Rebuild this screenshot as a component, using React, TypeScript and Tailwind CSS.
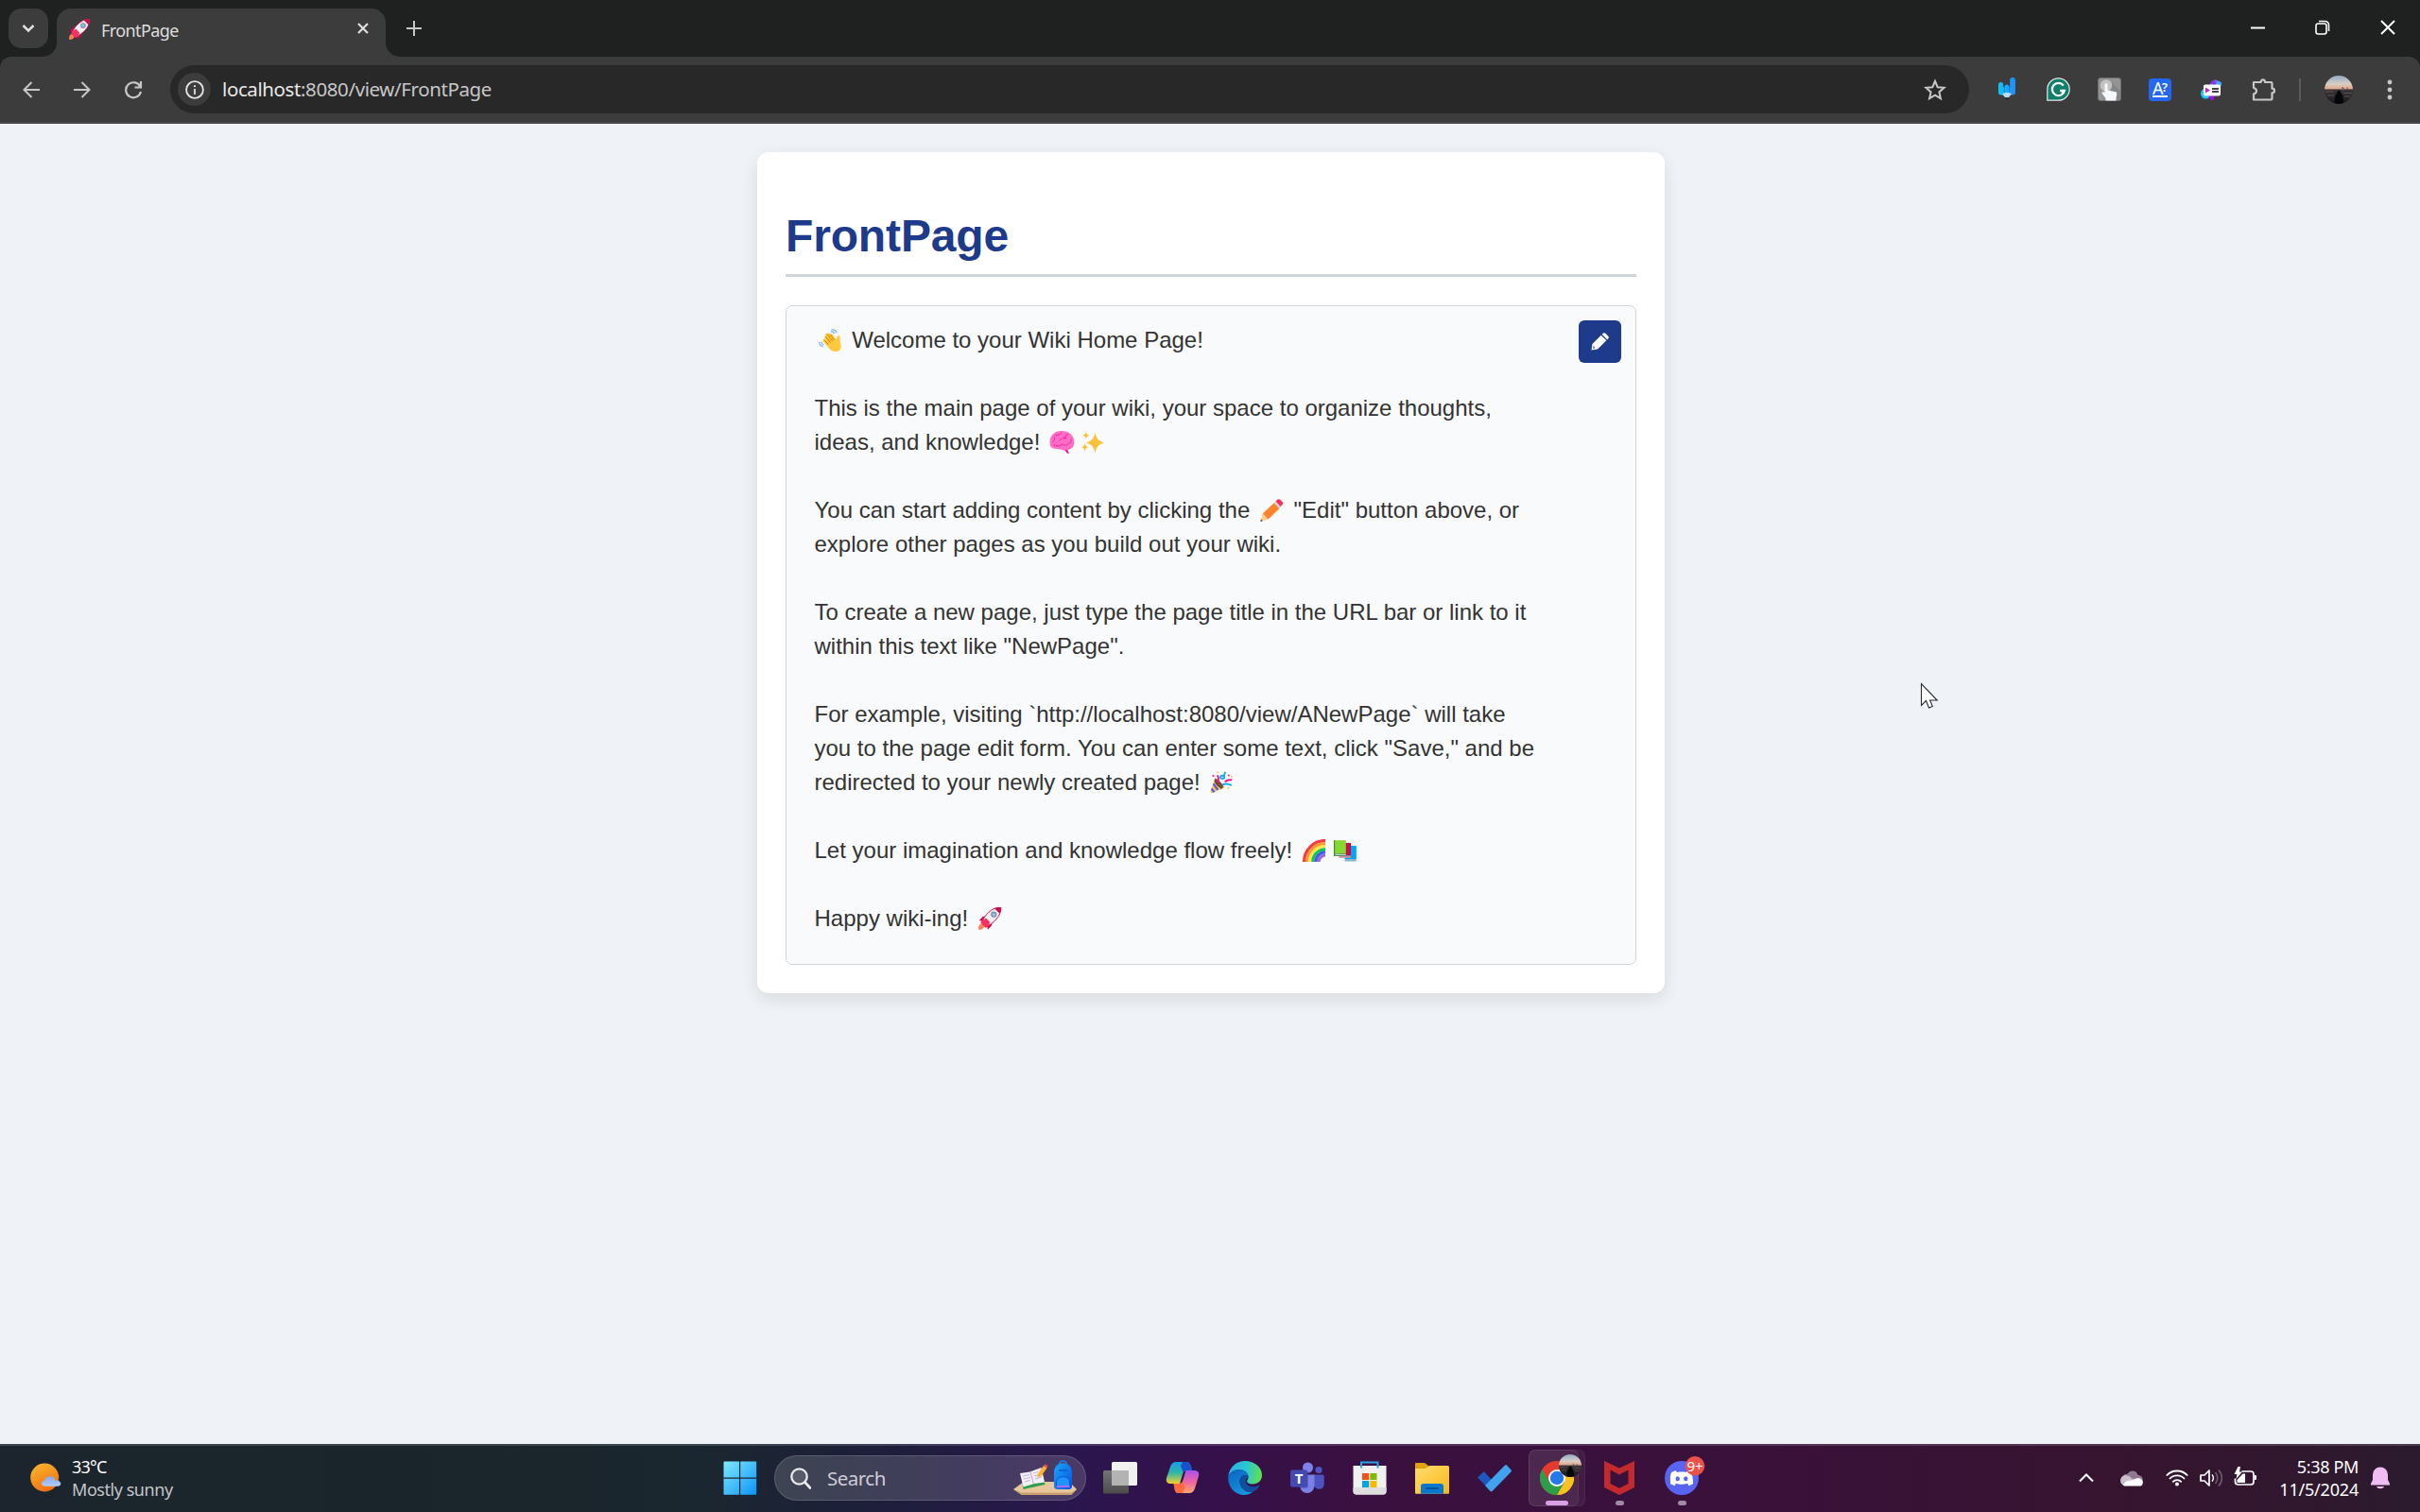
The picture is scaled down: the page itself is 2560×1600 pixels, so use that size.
import React from "react";

const UI = "font-['Noto_Sans','Open_Sans',sans-serif]";

/* ---------- Emoji drawings (24x24 artwork with side bearings) ---------- */

function Emoji({ label, children }: { label: string; children: React.ReactNode }) {
  return (
    <svg role="img" aria-label={label} viewBox="-4 0 33 24" className="inline-block h-6 w-[33px] align-[-4px]">
      {children}
    </svg>
  );
}

function WaveArt() {
  return (
    <g>
      <path d="M6.2 9.6c-.8-1 .9-2.3 1.8-1.200L7 6.600c-.8-1.300 1.100-2.400 2-1.200l.6.900c-.9-1.600 1.100-2.800 2.100-1.300l1.200 1.800c-.6-1.500 1.300-2.300 2.100-.900l3.600 5.700.900-3.100c.400-1.600 2.800-1.500 3 .300.200 2-.100 4.600.900 8.200 1.200 4.300-1.600 7-5.700 7-3.300 0-5.400-2-7.400-4.300L4.800 13.300c-1-1.200.600-2.600 1.700-1.500z" fill="#ffc83d" />
      <path d="m7.600 8.300 4.700 6M9.300 5.800l5 6.800M12.300 5.800l3.900 5.800M6 11.800l4 4.400" fill="none" stroke="#d67d00" strokeWidth="1" strokeLinecap="round" />
      <path d="M.6 14.200c.300 2.200 1.600 3.800 3.800 4.300M2.800 14c.300 1.300 1 2.200 2.300 2.700M13.700.8c2.300-.300 4.300.700 5.200 2.800M13.200 2.900c1.700-.1 2.900.5 3.600 1.800" fill="none" stroke="#6fa8f5" strokeWidth="1.100" strokeLinecap="round" />
    </g>
  );
}

function BrainArt() {
  return (
    <g>
      <path d="M14 19.500h4l2 4.500c-2-.200-3.500-1.500-4-3z" fill="#f70a8d" />
      <path d="M-.300 13C-1 6 3.500 0 12 0s13.300 5.500 13.300 11.500c0 4-1.300 7-4.800 8-2 .600-5.500 1.500-9 .300C7 18.500 2 19.500.500 16.500-.1 15.500-.2 14.200-.3 13z" fill="#ff6dc6" />
      <path d="M2.500 11.500c2-1 2.500-3.500 2-5M6 4.500c3 0 5-1 5.500-2.500M9 11c2-3 5-4 8-3.200M16 8c-.700-2 .3-4 2.500-4.500M6 15.500c2.500 1 5 .500 6.500-1.500M12.500 14c2.500 2 5.500 1.500 6.500-.500M22 9c.500 2-.500 4-2 4.500M3.500 14.500l1.500 1" fill="none" stroke="#f91f9c" strokeWidth="1" strokeLinecap="round" />
    </g>
  );
}

function SparklesArt() {
  return (
    <g fill="#fcc13b">
      <path d="M14.500 1.500c1.400 6.700 3.200 8.900 9.500 11-6.300 2.100-8.100 4.300-9.500 11-1.400-6.700-3.200-8.900-9.500-11 6.300-2.100 8.100-4.300 9.500-11z" />
      <path d="M4.800 1c.6 2.400 1.400 3.200 3.600 3.800-2.200.6-3 1.400-3.600 3.800-.6-2.400-1.400-3.200-3.600-3.800C3.400 4.200 4.200 3.400 4.800 1zM3.600 13c.7 2.800 1.500 3.700 4 4.300-2.500.6-3.300 1.500-4 4.300-.7-2.800-1.500-3.700-4-4.300 2.500-.6 3.300-1.500 4-4.300z" />
    </g>
  );
}

function PencilArt() {
  return (
    <g>
      <path d="M.3 24 2.700 15.600l6 6z" fill="#ffd08a" />
      <path d="m.3 24 .8-2.600 1.800 1.800z" fill="#433b6b" />
      <path d="m2.700 15.600 12-11.400 5.700 5.700-11.700 11.700z" fill="#ff822d" />
      <path d="m14.700 4.200 1.800-1.700 5.700 5.700-1.800 1.700z" fill="#d3d3d3" />
      <path d="m16.500 2.500 1.700-1.700c.9-.9 2.100-.9 3 0l2.300 2.300c.9.900.9 2.100 0 3l-1.800 1.800z" fill="#f92f60" />
    </g>
  );
}

function PartyArt() {
  return (
    <g>
      <path d="M5.500 7.500c2 .500 8.500 6.500 9 9.500l-3.300 2.600-6.200-5z" fill="#6d4534" />
      <path d="M5.500 7.500.600 21.500c-.300 1.500.500 2 1.700 1.700l12.200-6.200C10 15.500 7 12.500 5.500 7.500z" fill="#ffc440" />
      <path d="M5.500 7.500c1 4 4.500 8 9 9.500l-2.800 1.400C8 16.500 5.500 14 4.400 10.600z" fill="#6d4534" />
      <path d="m3.800 12.300 5.600 7.300-2 1-4.400-6zM2 17.500l3.500 4.300-2 .9-2.400-3z" fill="#4f52ff" />
      <path d="M7.500 4.500c2.500 2 1.500 5 .5 7.500M16 11.500c1.500-2.500 4.500-2.600 7.200-2.200" fill="none" stroke="#ff0f8a" strokeWidth="2" />
      <path d="M16.200.8c-1 2-1.500 4.500-1.200 6.500-2.200 1.600-4.600.1-3.800-1.700.800-1.600 3-1 3.600.600M13 14.500c3-1.500 6-1.500 9.800.600" fill="none" stroke="#12a8f4" strokeWidth="1.900" />
      <circle cx="3.500" cy="5" r="1.100" fill="#ff0f8a" /><circle cx="19.800" cy="4.500" r="1" fill="#ff0f8a" />
      <circle cx="8.300" cy="1.300" r=".9" fill="#ffc440" /><circle cx="23" cy="6" r=".9" fill="#ffc440" /><circle cx="19.500" cy="18" r="1.100" fill="#ffc440" />
    </g>
  );
}

function RainbowArt() {
  const bands: [number, string][] = [
    [22.5, "#fb3a3f"], [19.4, "#ff9a30"], [16.3, "#ffe64f"], [13.2, "#0ccb52"], [10.1, "#4457f5"], [7, "#9c68d6"],
  ];
  return (
    <g fill="none" strokeWidth="3.200">
      {bands.map(([r, c]) => (
        <path key={c} d={`M${24 - r} 24A${r} ${r} 0 0 1 24 ${24 - r}`} stroke={c} />
      ))}
    </g>
  );
}

function BooksArt() {
  return (
    <g>
      <path d="M11.500 7h12.300v14H11.500z" fill="#00a6f4" /><path d="M11.500 21h12.300v2.500H11.500z" fill="#8db4cf" />
      <path d="M5.500 4H18v13.500H5.500z" fill="#ca0b4a" /><path d="M5.500 17.500H18v2.300H5.500z" fill="#d58aa0" />
      <path d="M0 1.200h12.800v14H0z" fill="#86d72f" /><path d="M0 15.200h12.800V18H0z" fill="#4f8f54" /><path d="M1.500 15.800h11.300v1.100H1.500z" fill="#c8e6c9" />
      <path d="M0 1.200h1.200V18H0z" fill="#44911b" />
    </g>
  );
}

function RocketArt() {
  return (
    <g>
      <path d="M.3 24c-.5-3 .2-6 3-6.800l3 3C5.500 23 3 24 .3 24z" fill="#ff8257" />
      <path d="M8.500 9.500 4.500 10 .8 14.200l5 .6zM14.500 15.500l-.500 4-4.200 4.200-.600-5z" fill="#ca0b4a" />
      <path d="m3.500 13.500 7 7-3 1.200-5-5z" fill="#f92f60" />
      <path d="M23.800.2c.5 6.800-4.300 14.200-13.300 19.300l-6-6C9.600 4.500 17 -.3 23.800.2z" fill="#f0eef2" stroke="#c8124d" strokeWidth="1" />
      <path d="M23.800.2c.1 2.300-.2 4.300-1.300 6.600l-5.300-5.300C19.500.4 21.500.1 23.800.2z" fill="#ca0b4a" />
      <path d="m4.500 13.500 3.800-1.700L12.200 16l-1.700 3.500-3 1-4-4z" fill="#f92f60" />
      <circle cx="16.300" cy="7.700" r="2.500" fill="#7fc6f0" stroke="#8d8a99" strokeWidth="1.200" />
    </g>
  );
}

/* ---------- Browser chrome ---------- */

const line = { fill: "none", stroke: "currentColor" } as const;

function TabStrip() {
  return (
    <div className="flex h-[60px] items-start bg-[#1f2120] text-[#dedede]">
      <button className="mt-[9px] ml-[9px] grid size-[42px] place-items-center rounded-[14px] bg-[#3c3c3c]">
        <svg viewBox="0 0 14 10" className="h-[10px] w-[14px]"><path d="m1.500 2 5.500 5.500L12.500 2" {...line} strokeWidth="2.600" /></svg>
      </button>
      <div className="relative mt-[9px] ml-[9px] flex h-[51px] w-[348px] items-center rounded-t-[15px] bg-[#3c3c3c]">
        <svg viewBox="0 0 15 15" className="absolute bottom-0 -left-[15px] size-[15px]"><path d="M15 0v15H0A15 15 0 0 0 15 0z" fill="#3c3c3c" /></svg>
        <svg viewBox="0 0 15 15" className="absolute bottom-0 -right-[15px] size-[15px]"><path d="M0 0v15h15A15 15 0 0 1 0 0z" fill="#3c3c3c" /></svg>
        <svg viewBox="0 0 24 24" className="mb-[8px] ml-[13px] size-[22px]"><RocketArt /></svg>
        <span className={`${UI} mb-[6px] ml-[12px] w-[261px] text-[18px] tracking-[-0.6px] leading-6`}>FrontPage</span>
        <svg viewBox="0 0 12 12" className="mb-[9px] ml-[10px] size-3"><path d="m1 1 10 10M11 1 1 11" {...line} strokeWidth="2.200" /></svg>
      </div>
      <svg viewBox="0 0 16 16" className="mt-[22px] ml-[22px] size-4 text-[#c7c7c7]"><path d="M8 0v16M0 8h16" {...line} strokeWidth="2" /></svg>
      <div className="mt-[21px] mr-[26px] ml-auto flex items-center gap-[53px] text-white">
        <svg viewBox="0 0 15 15" className="size-[15px]"><path d="M0 7.500h15" {...line} strokeWidth="2" /></svg>
        <svg viewBox="0 0 16 16" className="size-4"><rect x="1" y="4" width="11" height="11" rx="2.200" {...line} strokeWidth="1.600" /><path d="M4 1.500h6.500a4 4 0 0 1 4 4V12" {...line} strokeWidth="1.600" /></svg>
        <svg viewBox="0 0 16 16" className="size-4"><path d="m1 1 14 14M15 1 1 15" {...line} strokeWidth="1.900" /></svg>
      </div>
    </div>
  );
}

function Avatar({ id, className }: { id: string; className: string }) {
  return (
    <svg viewBox="0 0 30 30" className={className}>
      <defs>
        <linearGradient id={id} x1="0" y1="0" x2="0" y2="1">
          <stop offset="0" stopColor="#93abc4" /><stop offset=".3" stopColor="#d9cdc5" /><stop offset=".46" stopColor="#e0a98a" /><stop offset=".5" stopColor="#3d3435" /><stop offset="1" stopColor="#15171b" />
        </linearGradient>
        <clipPath id={`${id}c`}><circle cx="15" cy="15" r="15" /></clipPath>
      </defs>
      <g clipPath={`url(#${id}c)`}>
        <path d="M0 0h30v30H0z" fill={`url(#${id})`} />
        <path d="M1 17h8M20 18.500h9M3 21h7M21 22h6M18 13h2v3M24 12.500v3" stroke="#56505a" strokeWidth="1" fill="none" />
        <path d="M10.500 30c0-6 .8-10 2.500-11 0-4.500 4.500-4.500 4.500 0 1.700 1 2.500 5 2.500 11z" fill="#050608" />
      </g>
    </svg>
  );
}

function Extensions() {
  const cell = "grid w-[54px] place-items-center";
  return (
    <div className="flex items-center">
      <div className={cell}>
        <svg viewBox="0 0 18 25" className="h-[25px] w-[18px]">
          <defs><linearGradient id="wg" x1="0" y1="0" x2="1" y2="0"><stop offset="0" stopColor="#12c3f8" /><stop offset="1" stopColor="#218bf4" /></linearGradient></defs>
          <path d="M0 7.500a2.500 2.500 0 0 1 5.200 0V10h1.300a2.500 2.500 0 0 1 5 0h.7V3a2.900 2.900 0 0 1 5.800 0v13c0 1.500-1 2.500-2.500 2.500h-13C1 18.500 0 17.500 0 16z" fill="url(#wg)" />
          <path d="M6.500 9v7M11.700 9v6" stroke="#1776d8" strokeWidth=".8" /><path d="M4 17.500c3-2 7-2 10 0L11 21H7z" fill="#b9daf4" /><path d="M7 22h4l-2 2z" fill="#1c2733" />
        </svg>
      </div>
      <div className={cell}>
        <svg viewBox="0 0 25 25" className="size-[25px]">
          <path d="M.8 24.200V12.500a11.700 11.700 0 1 1 11.700 11.700z" fill="#0f7f6b" stroke="#e4ebe9" strokeWidth="1.200" />
          <path d="M17.800 8.500A6.600 6.600 0 1 0 19 13.800h-5M16 16.500l3-2.800" {...line} stroke="#fff" strokeWidth="2.200" />
        </svg>
      </div>
      <div className={cell}>
        <svg viewBox="0 0 25 25" className="size-[25px]">
          <rect x=".5" y=".5" width="24" height="24" rx="2.500" fill="#949494" stroke="#6f6f6f" />
          <path d="m14 5 10 9v10H14z" fill="#858585" /><circle cx="9" cy="8.500" r="6.200" fill="#c3c3c3" />
          <path d="M7.500 7.500c0-1.800 3-1.800 3 0v6l8.500 1.800c1 .3 1.400 1 1.300 2L19.500 22v2.500H8.500V22L4.700 17c-.8-1.400.8-2.400 2-1.500l.8.700z" fill="#f5f8fc" />
        </svg>
      </div>
      <div className={cell}>
        <div className="relative size-6 rounded-[4px] bg-[#2468f2] text-white">
          <span className={`${UI} absolute top-[-2px] left-[4px] text-[18px] leading-[24px]`}>A</span>
          <span className={`${UI} absolute top-[1px] left-[14px] text-[13px] font-semibold leading-[16px]`}>?</span>
          <span className="absolute bottom-[4px] left-[4px] h-[1.500px] w-4 bg-white" />
        </div>
      </div>
      <div className={cell}>
        <svg viewBox="0 0 24 24" className="size-6">
          <defs><linearGradient id="vg" x1="0" y1="1" x2="1" y2="0"><stop offset="0" stopColor="#16d5ff" /><stop offset=".5" stopColor="#9a1ff0" /><stop offset="1" stopColor="#38b3ff" /></linearGradient></defs>
          <circle cx="16.500" cy="7" r="5.500" fill="url(#vg)" /><circle cx="6.500" cy="16" r="5.500" fill="#1fc8ff" /><path d="M8 17h9l-3 6h-2z" fill="#a30fe0" /><circle cx="20" cy="6" r="3" fill="#45a9ff" />
          <rect x="4" y="6.500" width="18" height="12" rx="1.800" fill="#fff" /><path d="m6 9.500 5 3-5 3z" fill="#c31fe0" /><path d="M13 11h7M13 14h7" stroke="#444" strokeWidth="1.800" />
        </svg>
      </div>
      <div className={cell}>
        <svg viewBox="0 0 26 26" className="ml-px size-[26px] text-[#c7c7c7]">
          <path d="M3 5h7.700c0-3.400 4.300-3.400 4.300 0h6.500a1 1 0 0 1 1 1v5.700c3.300 0 3.300 4.600 0 4.600V22.500a1 1 0 0 1-1 1H3v-6c4-1 4-5.500 0-6.500z" {...line} strokeWidth="2.200" strokeLinejoin="round" />
        </svg>
      </div>
    </div>
  );
}

function Toolbar() {
  return (
    <div className="bg-[#1f2120]">
      <div className="flex h-[71px] items-center rounded-t-[12px] border-b-2 border-[#484848] bg-[#3c3c3c] text-[#c7c7c7]">
        <svg viewBox="0 0 18 18" className="ml-6 size-[18px]"><path d="M9.500 1 1.500 9l8 8M1.500 9H18" {...line} strokeWidth="2" /></svg>
        <svg viewBox="0 0 18 18" className="ml-9 size-[18px]"><path d="m8.500 1 8 8-8 8M16.500 9H0" {...line} strokeWidth="2" /></svg>
        <svg viewBox="0 0 20 20" className="ml-[35px] size-5"><path d="M17.500 7A8 8 0 1 0 18 12M18 1v6.500h-6.500" {...line} strokeWidth="2.200" /></svg>
        <div className="ml-[29px] flex h-[51px] w-[1903px] items-center rounded-full bg-[#282828]">
          <div className="ml-2 grid size-[35px] place-items-center rounded-full bg-[#3c3c3c] text-[#e3e3e3]">
            <svg viewBox="0 0 20 20" className="size-5"><circle cx="10" cy="10" r="8.900" {...line} strokeWidth="1.900" /><path d="M10 9v6" {...line} strokeWidth="1.800" /><circle cx="10" cy="6.200" r="1.100" fill="currentColor" /></svg>
          </div>
          <span className={`${UI} ml-3 text-[20.500px] tracking-[-0.4px] whitespace-nowrap`}>
            <span className="text-[#e8e8e8]">localhost</span>:8080/view/FrontPage
          </span>
          <svg viewBox="0 0 24 24" className="mr-6 ml-auto size-6"><path d="m12 2.800 2.700 6.400 6.900.6-5.200 4.600 1.500 6.800-5.900-3.600-5.900 3.600 1.500-6.800-5.200-4.600 6.900-.6z" {...line} strokeWidth="2" /></svg>
        </div>
        <div className="ml-[13px]"><Extensions /></div>
        <div className="ml-3 h-6 w-0.5 bg-[#5b5b5b]" />
        <Avatar id="av1" className="ml-[25px] size-[30px]" />
        <svg viewBox="0 0 6 22" className="ml-9 h-[22px] w-[6px]" fill="currentColor"><circle cx="3" cy="3" r="2.400" /><circle cx="3" cy="11" r="2.400" /><circle cx="3" cy="19" r="2.400" /></svg>
      </div>
    </div>
  );
}

/* ---------- Wiki page ---------- */

function WikiCard() {
  return (
    <article className="ml-[801px] h-[890px] w-[960px] rounded-[12px] bg-white px-[30px] pt-[62px] font-['Liberation_Sans',Arial,sans-serif] text-[#333] shadow-[0_6px_18px_rgba(0,0,0,0.1)]">
      <h1 className="h-[70px] border-b-3 border-[#d1d5db] text-[48px] leading-[54px] font-bold tracking-[-0.15px] text-[#1e3a8a]">FrontPage</h1>
      <div className="relative mt-[30px] h-[698px] rounded-[7px] border border-[#d1d5db] bg-[#f9fafc] pt-[18px] pl-[29.500px] text-[24px] leading-9 whitespace-pre">
        <button className="absolute top-[15px] right-[15px] grid size-[45px] place-items-center rounded-[6px] bg-[#1e3a8a]">
          <svg viewBox="0 0 20 20" className="mr-px size-[19px]">
            <path d="M.5 19.500 1.500 12.500 11.300 2.800l5.900 5.900-9.800 9.800z" fill="#fff" /><path d="m12.300 1.900 1.100-1c.800-.800 2-.800 2.800 0l3 3c.8.800.8 2 0 2.800l-1 1.100z" fill="#fff" /><path d="m2.700 14.200-.500 3.400 1.900.200c.3-1 .1-1.700-.3-2.100z" fill="#1e3a8a" opacity=".7" />
          </svg>
        </button>
        <p><Emoji label="👋"><WaveArt /></Emoji> Welcome to your Wiki Home Page!</p>
        <p className="mt-9">This is the main page of your wiki, your space to organize thoughts,</p>
        <p>ideas, and knowledge! <Emoji label="🧠"><BrainArt /></Emoji><Emoji label="✨"><SparklesArt /></Emoji></p>
        <p className="mt-9">You can start adding content by clicking the <Emoji label="✏️"><PencilArt /></Emoji> "Edit" button above, or</p>
        <p>explore other pages as you build out your wiki.</p>
        <p className="mt-9">To create a new page, just type the page title in the URL bar or link to it</p>
        <p>within this text like "NewPage".</p>
        <p className="mt-9">For example, visiting `http://localhost:8080/view/ANewPage` will take</p>
        <p>you to the page edit form. You can enter some text, click "Save," and be</p>
        <p>redirected to your newly created page! <Emoji label="🎉"><PartyArt /></Emoji></p>
        <p className="mt-9">Let your imagination and knowledge flow freely! <Emoji label="🌈"><RainbowArt /></Emoji><Emoji label="📚"><BooksArt /></Emoji></p>
        <p className="mt-9">Happy wiki-ing! <Emoji label="🚀"><RocketArt /></Emoji></p>
      </div>
    </article>
  );
}

/* ---------- Taskbar ---------- */

function App36({ children, dot }: { children: React.ReactNode; dot?: boolean }) {
  return (
    <div className="relative grid h-full w-[66px] place-items-center">
      <svg viewBox="0 0 36 36" className="size-9 overflow-visible">{children}</svg>
      {dot && <span className="absolute bottom-[7px] left-[29px] h-[5px] w-[9px] rounded-full bg-[#a08ba6]" />}
    </div>
  );
}

function SearchArt() {
  return (
    <svg viewBox="0 0 68 38" className="mr-[8px] ml-auto h-[38px] w-[68px]">
      <defs><linearGradient id="bp" x1="0" y1="0" x2="1" y2="1"><stop offset="0" stopColor="#1aa7ff" /><stop offset="1" stopColor="#0552d8" /></linearGradient></defs>
      <path d="m0 31 11-8h48l8 8-6 6H9z" fill="#e9c79c" /><path d="m0 31 9 3.500h52l6-3.500-6 6H9z" fill="#c99f6d" />
      <path d="m8 16 2.500 15 23-5-3-14z" fill="#2fa04e" />
      <path d="m7 14 10.500-1.500L29.500 8 33 23.500l-11 1.500-11.500 3.500z" fill="#f3effa" /><path d="m18 12.500 3.500 13" stroke="#b8a9d6" />
      <path d="m10 17 7-1.500M11 20l7-1.500M12 23l6-1.500M21 14l5-1.500M22 17l7-2M23 20l7-2" stroke="#b9b0c9" strokeWidth=".9" />
      <path d="m25 18.500 1-4L32 6l3.500 2.500-6 8.500z" fill="#ffb02e" /><path d="m32 6 1.500-1.500 3 1.500-1 2.500z" fill="#f2523f" />
      <path d="M49 4c0-4 7-4 7 0" fill="none" stroke="#1583e8" strokeWidth="1.500" />
      <path d="M43 13c0-13 19-13 19 0v15c0 2-1.500 3-3.500 3h-12c-2 0-3.500-1-3.500-3z" fill="url(#bp)" />
      <path d="M45.500 23c0-7 14-7 14 0v5h-14z" fill="#2093ff" stroke="#0758d6" /><path d="M45.500 28h14" stroke="#b86cf5" strokeWidth="1.800" /><path d="M48 11h9" stroke="#0a58cc" strokeWidth="1.500" />
    </svg>
  );
}

function Taskbar() {
  return (
    <footer className={`${UI} relative flex h-[72px] items-stretch bg-[linear-gradient(90deg,#1c252d_0%,#1a262b_22%,#1b2730_29%,#1e1e3c_37%,#2a174d_44%,#35104b_50%,#3a1040_56%,#391138_75%,#36142f_88%,#2b1a2e_100%)] shadow-[inset_0_2px_0_rgba(255,255,255,0.15)]`}>
      <div className="flex w-[750px] items-center">
        <svg viewBox="0 0 34 32" className="mb-px ml-8 h-8 w-[34px]">
          <defs><linearGradient id="sun" x1=".2" y1="0" x2=".7" y2="1"><stop offset="0" stopColor="#f7b62e" /><stop offset="1" stopColor="#f26a12" /></linearGradient><linearGradient id="cl" x1="0" y1="0" x2="0" y2="1"><stop offset="0" stopColor="#86a9ee" /><stop offset="1" stopColor="#b1cbfa" /></linearGradient></defs>
          <circle cx="15.200" cy="15.500" r="15" fill="url(#sun)" /><path d="M16 24.800c-5 0-5.500-5.600-.5-6.300 1.500-6 9.500-6 11 0 7-.7 7.500 6.300 2.500 6.300z" fill="url(#cl)" />
        </svg>
        <div className="ml-[10px] text-[18px] leading-6 text-white"><div className="tracking-[-0.8px]">33°C</div><div className="tracking-[-0.45px] text-[#c3c6c8]">Mostly sunny</div></div>
      </div>
      <App36>
        <defs><linearGradient id="win" x1="0" y1="0" x2="1" y2="1"><stop offset="0" stopColor="#7deafd" /><stop offset="1" stopColor="#0c93f8" /></linearGradient></defs>
        <path d="M.5 1.500Q.5.5 1.500.5h15.500v17H.5zM18.200.5h16q1 0 1 1v16h-17zM.5 18.700H17v17H1.500q-1 0-1-1zM18.200 18.700h17v16q0 1-1 1h-16z" fill="url(#win)" />
      </App36>
      <div className="mt-3 ml-[3px] flex h-12 w-[330px] items-center rounded-full border-[1.500px] border-white/15 bg-white/15">
        <svg viewBox="0 0 22 23" className="ml-4 h-[23px] w-[22px] text-[#e9e9ee]"><circle cx="9.500" cy="9.500" r="8.200" fill="#ffffff22" stroke="currentColor" strokeWidth="2.300" /><path d="m15.500 15.500 5.500 6" {...line} strokeWidth="2.600" strokeLinecap="round" /></svg>
        <span className="ml-[17px] text-[20.500px] tracking-[-0.5px] text-[#cfccd8]">Search</span>
        <SearchArt />
      </div>
      <div className="ml-[3px] flex">
        <App36>
          <defs><linearGradient id="tv" x1="0" y1="0" x2="0" y2="1"><stop offset="0" stopColor="#747474" /><stop offset="1" stopColor="#4b4b4b" /></linearGradient></defs>
          <rect x="0" y="10" width="27" height="24.500" rx="1.500" fill="url(#tv)" /><rect x="9" y="1" width="27" height="25" rx="1.500" fill="#f1f1f1" /><path d="M9 10h18v16H9z" fill="#b3b3b3" />
        </App36>
        <App36>
          <defs>
            <linearGradient id="cp1" x1="0" y1="0" x2="0" y2="1"><stop offset="0" stopColor="#179bea" /><stop offset=".5" stopColor="#2fb7a5" /><stop offset="1" stopColor="#f3d22b" /></linearGradient>
            <linearGradient id="cp2" x1="0" y1="0" x2="0" y2="1"><stop offset="0" stopColor="#a652f0" /><stop offset=".5" stopColor="#ee63a0" /><stop offset="1" stopColor="#ffa66b" /></linearGradient>
          </defs>
          <path d="M11 1h11c3 0 4 2 5 5l1 4h-5c-3 0-4 1-5 4l-3 10H6c-4 0-6-2-5-6L5 6c1-3 3-5 6-5z" fill="url(#cp1)" />
          <path d="M18 1h4c3 0 4 2 5 5l1 4h-5c-2 0-3.500.5-4.500 2L16 5z" fill="#1652cb" />
          <path d="M25 34H14c-3 0-4-2-4.500-5L8.500 24H14c2.500 0 3.500-1 4.500-4l3-10H30c4 0 6 2 5 6l-4 13c-1 3-3 5-6 5z" fill="url(#cp2)" />
          <path d="M18 34h-4c-3 0-4-2-4.500-5L8.500 24H14c2 0 3-.5 4-2l2.500 6z" fill="#fb6b3f" />
        </App36>
        <App36>
          <defs>
            <linearGradient id="ed1" x1="0" y1=".3" x2="1" y2=".4"><stop offset="0" stopColor="#2aaee8" /><stop offset=".55" stopColor="#2bc8d0" /><stop offset="1" stopColor="#62e04c" /></linearGradient>
            <linearGradient id="ed2" x1="0" y1="0" x2=".6" y2="1"><stop offset="0" stopColor="#0c62bd" /><stop offset="1" stopColor="#1495e0" /></linearGradient>
          </defs>
          <path d="M.3 16C1.500 6.500 9 0 18 0c10.500 0 18 7 18 15 0 6-4.500 9.500-10 9.500-4 0-6-1.500-6-3 0-1.200 1.500-1.800 1.500-4.500 0-4.500-4-7.500-9-7.500C6 9.500 1.500 13 .3 16z" fill="url(#ed1)" />
          <path d="M.2 17C1 12.500 6 9 12 9c5 0 9 2.800 9.500 7-4.500-3-9 .5-9 5.500 0 6.500 6 12.500 13.500 11.500-3 2-5.500 3-8.500 3C7.500 36 0 28 .2 17z" fill="url(#ed2)" />
          <path d="M21.500 15.500c-5-2-9.500 1-9 6.500.5 6.500 6.500 12 13.500 11 3-1.500 5.500-3.500 7.300-6.500.3-.8-.2-1-1-.6-7 3.200-13.500 0-13.500-4.900 0-2.500 2.700-3 2.700-5.500z" fill="#0f4f9e" />
        </App36>
        <App36>
          <circle cx="30" cy="9.500" r="3.600" fill="#4f57c4" /><path d="M25 14.500h9c1 0 1.700.7 1.700 1.700v8c0 7-9 7-10.700 2z" fill="#4c53be" />
          <circle cx="18.500" cy="7" r="5.500" fill="#7c83ea" /><path d="M10 14.500h15.500V25c0 12-15.500 12-15.500 0z" fill="#7b80e5" />
          <path d="M12 10h4c1 0 3 1 3 2v15c0 1-1 2-2 2h-7z" fill="#2c338b" opacity=".35" /><rect x="0" y="9.500" width="18" height="18" rx="1.800" fill="#434bb2" />
          <text x="9" y="24" textAnchor="middle" fontSize="15" fontWeight="700" fill="#fff" fontFamily="Noto Sans">T</text>
        </App36>
        <App36>
          <path d="M.5 5h35v27q0 3.500-3.500 3.500H4Q.5 35.500.5 32z" fill="#f1f1f1" /><path d="M.5 28h35v4q0 3.500-3.500 3.500H4Q.5 35.500.5 32z" fill="#dedede" /><path d="M9 7.500V1.500h17.500v6" fill="none" stroke="#24a4e4" strokeWidth="2" />
          <path d="M10 13h7.200v7H10z" fill="#f1511b" /><path d="M18.300 13h7.200v7h-7.200z" fill="#7fba00" /><path d="M10 21h7.200v7H10z" fill="#00a3ee" /><path d="M18.300 21h7.200v7h-7.200z" fill="#fcb900" />
        </App36>
        <App36>
          <defs><linearGradient id="fo" x1="0" y1="0" x2="1" y2="1"><stop offset="0" stopColor="#ffdd70" /><stop offset="1" stopColor="#f7b916" /></linearGradient></defs>
          <path d="M0 3q0-1 1-1h9l4 3v6H0z" fill="#e0a20c" /><path d="M0 8h11l4-3h19.500q1.500 0 1.500 1.500V34q0 .8-1 .8H1q-1 0-1-.8z" fill="url(#fo)" />
          <path d="M6 34.800V27q0-3 3-3h18q3 0 3 3v7.800z" fill="#0b78cf" /><path d="M11 29h14" stroke="#064e93" strokeWidth="1.800" />
        </App36>
        <App36>
          <path d="m0 17.500 6.800-6.500 8 9-5.500 7z" fill="#1c58c0" strokeLinejoin="round" /><path d="M8 26 29 4.500q1-1 2 0l4.500 5q.8 1 0 2L15.500 32q-1 .8-2 0z" fill="#41a3ee" />
        </App36>
        <div className="relative flex h-full w-[66px] items-center">
          <span className="absolute top-[6px] left-[3px] h-[60px] w-[60px] rounded-[7px] border border-white/5 bg-white/5" />
          <span className="absolute top-[6px] left-[3px] h-[60px] w-[53px] rounded-[7px] border border-white/5 bg-white/5" />
          <svg viewBox="0 0 36 36" className="relative ml-[15px] size-9">
            <circle cx="18" cy="18" r="18" fill="#e33b2e" />
            <path d="M18 9h15.600A18 18 0 0 1 18 36l7.800-13.500z" fill="#fcc31e" />
            <path d="M2.400 9l7.800 13.500L25.800 22.500 18 36A18 18 0 0 1 2.400 9z" fill="#2c9e48" />
            <circle cx="18" cy="18" r="9" fill="#fff" /><circle cx="18" cy="18" r="7.200" fill="#2478ea" />
          </svg>
          <Avatar id="av2" className="absolute top-[11px] left-[35px] size-6" />
          <span className="absolute bottom-[7px] left-[21px] h-[5px] w-6 rounded-full bg-[#da9ee4]" />
        </div>
        <App36 dot>
          <path d="m2 0 16 7.500L34 0v28l-16 8-16-8z" fill="#c22a2b" /><path d="m8.500 9.500 9.500 5 9.500-5V24L18 28.800 8.500 24z" fill="#3a113c" />
        </App36>
        <App36 dot>
          <circle cx="18" cy="18" r="18" fill="#5865f2" />
          <path d="M12 10.200c-2 .4-3.500 1-4.700 1.800C5.200 15.500 6 19 6 24c1.600 1.200 3 1.700 4.600 2.200l1.300-2.400c3.900 1.300 8.300 1.300 12.200 0l1.300 2.400c1.600-.5 3-1 4.600-2.200 0-5-.2-8.500-2.300-12-1.200-.8-2.700-1.400-3.700-1.800l-.9 1.800c-3.400-.6-6.800-.6-10.200 0z" fill="#fff" />
          <ellipse cx="13.700" cy="18.800" rx="2.200" ry="2.500" fill="#5865f2" /><ellipse cx="22.300" cy="18.800" rx="2.200" ry="2.500" fill="#5865f2" />
          <circle cx="32" cy="5.300" r="10.300" fill="#e9514d" /><text x="32" y="10.800" textAnchor="middle" fontSize="15" fill="#fff" fontFamily="Noto Sans">9+</text>
        </App36>
      </div>
      <div className="ml-auto flex items-center pr-[32px] text-white">
        <svg viewBox="0 0 16 10" className="mr-7 h-[10px] w-4"><path d="m1 8.500 7-7 7 7" {...line} strokeWidth="2" /></svg>
        <svg viewBox="0 0 24 17" className="mr-6 h-[17px] w-6"><path d="M4.500 15.500C-1 15-1.500 8 3 6.500 4 4 6 3.500 7.500 4 10-1 17.500-.5 18.500 5c5 0 7 6 4 9z" fill="#8f7a92" /><path d="M4.500 16C-1 15.500-1.500 6 5 5c4 0 7 2.500 9 5.500z" fill="#c9bfcb" /><path d="M3 15.500c2-4 5-5.500 8-5l6-2c4-1.500 8 2 6.500 6-.5 1.500-1.500 2-3 2H5c-1 0-1.500-.3-2-1z" fill="#fff" /></svg>
        <svg viewBox="0 0 24 18" className="mr-3 h-[18px] w-6"><path d="M.8 6.500c6-6.700 16.400-6.700 22.400 0M4 10c4.500-4.800 11.500-4.800 16 0M7.300 13.300c2.800-2.900 6.600-2.900 9.400 0" {...line} strokeWidth="1.800" /><circle cx="12" cy="15.500" r="2" fill="currentColor" /></svg>
        <svg viewBox="0 0 24 20" className="mr-3 h-5 w-6"><path d="M1 7h4l5-5v16l-5-5H1z" {...line} strokeWidth="1.700" strokeLinejoin="round" /><path d="M13 6.500c1.800 2 1.800 5 0 7" {...line} strokeWidth="1.600" /><path d="M16.500 4c3 3.500 3 8.500 0 12M20 1.500c4.500 5 4.500 12 0 17" {...line} strokeWidth="1.600" opacity=".3" /></svg>
        <svg viewBox="0 0 24 20" className="mb-1 h-5 w-6"><path d="M8.500 5H18q3 0 3 3v8q0 3-3 3H4.500q-3 0-3-3v-3.500" {...line} strokeWidth="1.700" /><path d="M22 9h1q1 0 1 1v3q0 1-1 1h-1z" fill="currentColor" /><path d="M9.500 7.500h2.500V17H3.500v-3z" fill="currentColor" /><path d="M4.500 0 .5 8h3L2.500 13 9 5.500H6L7 0z" fill="currentColor" /></svg>
        <div className="ml-[22px] w-[86px] text-right text-[18px] leading-6 tracking-[-0.2px]"><div className="tracking-[-0.35px]">5:38 PM</div><div>11/5/2024</div></div>
        <svg viewBox="0 0 20 24" className="ml-[13px] h-6 w-5"><path d="M2 8.500a8 8 0 0 1 16 0V14l2 4v1.500H0V18l2-4z" fill="#efbdf3" /><path d="M6 21h8c-.8 3-7.200 3-8 0z" fill="#efbdf3" /></svg>
      </div>
    </footer>
  );
}

export default function App() {
  return (
    <div className="relative flex h-[1600px] w-[2560px] flex-col overflow-hidden bg-[#eff3f8]">
      <TabStrip />
      <Toolbar />
      <main className="flex-1 pt-[30px]"><WikiCard /></main>
      <Taskbar />
      <svg viewBox="0 0 20 28" className="absolute top-[722px] left-[2031px] h-7 w-5">
        <path d="M1.500 1.500v23l5-5L9.500 27l3.800-1.600L10.600 19h7.600z" fill="#fff" stroke="#2a2a33" strokeWidth="1.100" />
      </svg>
    </div>
  );
}
